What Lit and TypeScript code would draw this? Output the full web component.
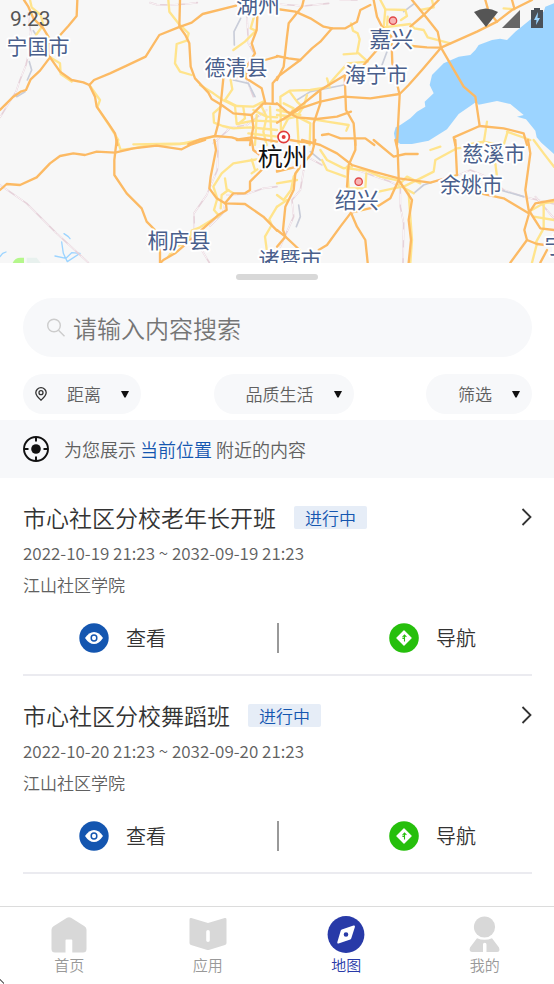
import { LitElement, html, svg, css } from "lit";
import { customElement } from "lit/decorators.js";

// Map artwork: four tiles, each 831 units wide, listing lines by class.
interface Tile {
  x: number;
  y: number;
  rail: string[];
  canal: string[];
  minor: string[];
  major: string[];
}

const TILES: Tile[] = [
  {
    x: 0, y: 0,
    rail: ["450,8 470,14 510,15 560,12 592,8", "84,40 92,95 86,160 78,195 60,240 48,275 0,352", "738,0 742,70 745,130 762,160", "700,240 735,225 760,290", "680,385 740,375 800,330", "640,430 690,385"],
    canal: ["88,185 95,210 82,240", "50,290 75,275", "722,55 702,95 703,135", "700,240 745,250 765,290", "100,92 108,104"],
    minor: ["90,0 95,22 122,45 130,75 108,105", "150,172 180,190 182,222 215,245", "268,255 300,300 292,322 325,372 355,420", "505,0 508,35 535,70 566,100 560,122 530,132 525,190 540,215 575,225", "600,255 640,280 668,300 705,318", "762,50 752,85 768,92 735,125 700,150", "692,240 697,268 675,300 710,318 760,320 790,305", "665,318 640,340 642,368 668,378 700,385 750,382 831,390", "705,318 710,372 760,362 831,365", "730,322 735,355 715,372", "780,310 800,350 790,395 800,435", "760,330 800,350 831,352", "810,320 815,435", "745,400 831,410", "770,345 765,435", "400,433 480,432 570,430 645,408"],
    major: ["232,0 230,48 205,78 178,108", "72,0 85,20 100,55 130,85 148,115 150,172", "0,330 40,290 62,275 78,270 92,238 120,212 150,172 180,215 215,240 250,247 268,255", "268,255 282,240 330,220 380,197 437,170 478,105 535,82 575,68 608,42 708,17", "268,255 285,290 290,320 325,370 345,400 352,435", "540,0 538,80 556,105 568,130 572,200 585,235 625,278 635,297 665,315 700,340 755,345 790,310 831,312", "670,235 662,315 655,370 645,408", "565,432 600,418 645,408 695,412 715,418 755,412 831,425", "772,50 770,90 755,130 765,160 740,200 738,235 785,265 796,310", "795,180 831,170", "831,235 818,250 818,310", "755,345 760,380 750,435"],
  },
  {
    x: 831, y: 0,
    rail: ["0,12 80,18 155,10", "190,0 240,0"],
    canal: ["380,35 410,12", "330,155 315,195", "60,300 100,275 200,255", "0,5 0,40"],
    minor: ["310,0 325,28 385,30 390,48 372,60", "325,28 320,82 400,72 412,85 440,90 452,112 520,130", "222,70 228,92 242,100 248,118 240,160 200,163", "245,160 272,185 212,190 180,225 148,262 100,270 38,272 10,290 12,400", "332,50 330,82", "465,0 470,22 430,30", "38,275 60,305 78,322 60,350 65,435", "0,330 70,345", "30,348 0,345", "90,285 80,320 30,350", "90,355 150,365 215,375 208,392", "20,310 50,325 15,390", "10,360 60,350 100,370 98,435", "150,235 158,262", "620,430 630,365", "692,395 680,435", "565,435 620,425 665,435", "712,28 680,25", "690,395 760,420"],
    major: ["0,27 55,35 100,55 140,80 165,85 205,85 240,65 250,30 280,15", "80,0 75,20 35,70 30,110 20,200 0,240", "165,85 130,125 105,145 70,180 0,232", "0,168 35,175 70,180", "290,0 300,50 315,80 343,110 346,190 368,285 360,435", "485,0 440,45 400,80", "405,0 450,55 482,95 492,143", "405,138 450,142 492,143", "492,143 600,95 660,65 705,30 765,0", "625,0 635,35 660,65", "705,0 712,25", "492,143 435,210 395,255 368,282 280,295 200,290 130,305 70,325 30,350 0,368", "492,143 525,200 560,260 595,290 608,378 680,385 740,400 750,435", "608,378 530,412 535,435", "300,150 260,195", "205,225 130,270 80,310 40,340", "203,228 207,330 230,370 235,435", "130,275 130,310 110,370 110,435", "0,310 30,335 60,352 120,357 180,350 222,335", "135,405 155,402 190,415 265,415 292,435"],
  },
  {
    x: 0, y: 420,
    rail: ["0,135 80,190 170,280 265,368", "655,0 652,90 620,165 582,220 583,280", "605,330 628,368", "630,258 668,220 675,190", "680,165 740,162 790,145 831,140"],
    canal: [],
    minor: ["352,0 362,30 400,25 450,15 540,12 600,0", "770,58 700,70 665,100 640,140 652,175 642,210 655,225", "675,115 680,148 700,160", "685,150 665,165 662,205", "660,225 600,262 575,272 568,300", "505,350 525,320 560,310", "831,200 808,238 815,255 795,290 800,328", "755,100 772,88", "755,58 765,90"],
    major: ["0,150 20,132 60,135 110,112 150,70 180,48 220,40 255,45 290,35 345,38 400,25 470,17 545,28 570,15 615,0", "350,0 343,60 343,105 380,160 425,205 440,245 465,270", "643,0 648,30 632,110 628,145 650,175 675,190 735,192 790,230 831,272", "678,190 680,210 655,225 610,265 560,310 525,340 490,360 480,370", "480,325 480,370", "785,90 750,125 750,150 735,160 700,160 675,190", "710,0 755,0 760,30 785,50"],
  },
  {
    x: 831, y: 420,
    rail: ["85,40 80,90 70,150 45,180 50,230 10,320", "90,50 135,75", "240,90 340,125 370,140 370,200 380,250 378,368", "545,105 580,90 640,115 680,150 740,170 831,192", "775,170 831,235"],
    canal: ["410,160 440,135 470,125", "65,195 70,230 58,260", "100,35 130,60", "670,150 740,170"],
    minor: ["0,165 20,180 42,150 50,110 70,80", "0,200 30,180", "0,130 60,120", "130,30 150,60 200,85 225,80", "135,60 150,90 205,110", "210,80 215,145 265,145 268,100", "210,85 270,92 310,110 365,122", "305,155 350,145 375,140 410,160", "380,140 430,115 470,95 475,60 540,25 620,15", "395,160 405,300 400,368", "770,0 800,40 831,80", "755,215 800,190 831,185", "780,310 765,368", "800,190 800,265 775,310", "655,70 660,110", "460,30 490,20", "365,135 390,110 430,130", "770,230 831,240"],
    major: ["355,0 362,30 365,115", "75,0 130,15 180,40 225,75 290,95 365,115 460,128 540,105", "235,0 235,30 215,75 210,140", "535,0 540,105", "290,0 350,50 385,42 422,42", "365,120 405,180 395,240 402,300 395,368", "365,120 340,175 300,200 222,218 190,260 150,315 125,330", "222,218 240,260 265,300 272,368", "115,0 105,40 70,80 55,100 50,150 25,200 18,270 25,290 68,330", "0,270 25,290 0,320", "40,0 100,10", "753,0 760,40 745,150 755,210 790,265 831,270", "610,160 680,175 755,220 775,190 831,180", "755,225 742,270 750,300 700,368", "750,300 780,312 831,318", "0,30 0,95 60,80", "810,330 790,368"],
  },
];

interface Place { name: string; x: number; y: number; kind: string }
const PLACES: Place[] = [
  { name: "宁国市", x: 114, y: 162, kind: "county" },
  { name: "湖州", x: 774, y: 40, kind: "city" },
  { name: "德清县", x: 708, y: 225, kind: "county" },
  { name: "嘉兴", x: 1174, y: 142, kind: "city" },
  { name: "海宁市", x: 1129, y: 246, kind: "county" },
  { name: "杭州", x: 848, y: 498, kind: "capital" },
  { name: "绍兴", x: 1070, y: 625, kind: "city" },
  { name: "慈溪市", x: 1481, y: 483, kind: "county" },
  { name: "余姚市", x: 1414, y: 576, kind: "county" },
  { name: "桐庐县", x: 537, y: 745, kind: "county" },
  { name: "诸暨市", x: 870, y: 801, kind: "county" },
  { name: "宁波", x: 1699, y: 759, kind: "city" },
];

const lines = (list: string[], cls: string) =>
  list.map((p) => svg`<polyline class=${cls} points=${p}></polyline>`);

@customElement("area-map")
class AreaMap extends LitElement {
  static styles = css`
    :host { display: block; height: 263px; background: #f7f7f7; overflow: hidden; }
    svg { display: block; width: 100%; height: 100%; }
    polyline { fill: none; stroke-linejoin: round; stroke-linecap: round; }
    .major { stroke: #fcba64; stroke-width: 7; }
    .minor { stroke: #ffe48c; stroke-width: 7; }
    .rail { stroke: #e6d2da; stroke-width: 5; }
    .tie { stroke: #fbf6f8; stroke-width: 3; stroke-dasharray: 30 24; }
    .canal { stroke: #c9cdd9; stroke-width: 5; }
    .stream { stroke: #9cd4ff; stroke-width: 4; }
    .sea { fill: #9cd4ff; }
    text {
      font-family: "Noto Sans CJK SC", sans-serif; font-weight: 400; text-anchor: middle;
      fill: #4a5f8c; stroke: #fff; stroke-width: 12; stroke-linejoin: round; paint-order: stroke;
    }
    .county { font-size: 63px; }
    .city { font-size: 66px; }
    .capital { font-size: 75px; fill: #111; }
  `;

  render() {
    return html`
      <svg viewBox="0 0 1662 789" preserveAspectRatio="xMidYMid slice" role="img" aria-label="地图">
        <path class="sea" d="M1662 10L1636 20L1631 35L1596 55L1571 75L1546 95L1521 120L1500 116L1476 120L1436 135L1426 150L1411 165L1376 170L1331 190L1296 225L1289 255L1301 280L1274 305L1276 320L1251 335L1231 355L1201 375L1187 382L1182 400L1186 422L1201 432L1236 432L1286 422L1341 388L1376 342L1411 318L1428 306L1436 314L1491 303L1531 312L1571 345L1551 350L1578 358L1606 392L1610 412L1624 428L1662 462Z"></path>
        <path d="M38 789Q44 773 62 773H72V789Z" fill="#b5f78c"></path>
        <path d="M80 773H110L122 789H80Z" fill="#e8f1ee"></path>
        <polyline class="stream" points="192,701 205,710 210,716"></polyline>
        <polyline class="stream" points="185,726 190,760 202,785 240,760 215,758 198,775 165,768"></polyline>
        <polyline class="stream" points="0,770 8,760 18,756"></polyline>
        ${TILES.map((t) => svg`<g transform="translate(${t.x} ${t.y})">
          ${lines(t.rail, "rail")}${lines(t.rail, "tie")}${lines(t.canal, "canal")}${lines(t.minor, "minor")}
        </g>`)}
        ${TILES.map((t) => svg`<g transform="translate(${t.x} ${t.y})">${lines(t.major, "major")}</g>`)}
        <g fill="#f8b5b5" stroke="#e04848" stroke-width="4">
          <circle cx="1179" cy="62" r="11"></circle>
          <circle cx="1076" cy="545" r="11"></circle>
        </g>
        <circle cx="851" cy="411" r="17" fill="#fff" stroke="#e23c3c" stroke-width="5"></circle>
        <circle cx="851" cy="411" r="6" fill="#e23c3c"></circle>
        ${PLACES.map((p) => svg`<text class=${p.kind} x=${p.x} y=${p.y}>${p.name}</text>`)}
      </svg>`;
  }
}

interface Course { title: string; time: string; place: string }
const COURSES: Course[] = [
  { title: "市心社区分校老年长开班", time: "2022-10-19 21:23 ~ 2032-09-19 21:23", place: "江山社区学院" },
  { title: "市心社区分校舞蹈班", time: "2022-10-20 21:23 ~ 2032-09-20 21:23", place: "江山社区学院" },
];

const pin = html`<svg width="12" height="14" viewBox="0 0 12 14" fill="none" stroke="#333" aria-hidden="true">
  <path d="M6 13.2C3.2 10.6.8 8.4.8 5.7A5.2 5 0 0 1 11.2 5.7C11.2 8.4 8.8 10.6 6 13.2Z" stroke-width="1.3"></path>
  <circle cx="6" cy="5.7" r="2" stroke-width="1.3"></circle></svg>`;

const caret = html`<svg width="8" height="7" viewBox="0 0 8 7" aria-hidden="true"><path d="M0 0H8L4.600 6.500H3.400Z" fill="#111"></path></svg>`;

const eye = html`<svg width="30" height="30" viewBox="0 0 30 30" aria-hidden="true">
  <circle cx="15" cy="15" r="14.7" fill="#1456b0"></circle>
  <path d="M6 15Q10 9 15 9T24 15Q20 21 15 21T6 15Z" fill="#fff"></path>
  <ellipse cx="15" cy="15" rx="2.8" ry="3" fill="#fff" stroke="#1456b0" stroke-width="1.5"></ellipse></svg>`;

const guide = html`<svg width="30" height="30" viewBox="0 0 30 30" aria-hidden="true">
  <circle cx="15" cy="15" r="14.8" fill="#26bf0c"></circle>
  <path d="M15 8L22 15L15 22L8 15Z" fill="#fff" stroke="#fff" stroke-width="1.4" stroke-linejoin="round"></path>
  <path d="M15.5 18.600V12M13.600 14.200L15.500 12L17.400 13.800M13.400 15.400H15.500" fill="none" stroke="#26bf0c" stroke-width="1.1"></path></svg>`;

const TABS = [
  { label: "首页", icon: svg`<path d="M17 1.8Q19 .6 21 1.8L34.5 10.2Q36.500 11.400 36.500 13.700V33Q36.500 36.500 33 36.500H22.300V24.500Q22.300 23.500 21.300 23.500H16.500Q15.500 23.500 15.500 24.500V36.500H5Q1.500 36.500 1.500 33V13.700Q1.500 11.400 3.500 10.200Z" fill="#d8d8d8"></path>` },
  { label: "应用", icon: svg`<path fill-rule="evenodd" d="M2.300 2L19 7L35.700 2Q37.500 1.600 37.500 3.400V27Q37.500 28.600 36 29.100L20.500 33.700Q19 34.200 17.500 33.700L2 29.100Q.5 28.600.5 27V3.400Q.5 1.600 2.300 2ZM19 14Q17.200 14 17.200 15.800V24.200Q17.200 26 19 26T20.800 24.200V15.800Q20.800 14 19 14Z" fill="#d8d8d8"></path>` },
  { label: "地图", active: true, icon: svg`<circle cx="19" cy="18.500" r="18.400" fill="#283aa8"></circle><path fill-rule="evenodd" d="M26.500 9.600Q28.300 9.300 27.900 11L24.300 22.200Q24 23 23.300 23.400L11.500 27.500Q9.900 27.800 10.300 26.200L13.700 14.800Q14 13.900 14.800 13.500ZM19 16.200A2.300 2.300 0 1 0 19 20.800A2.300 2.300 0 1 0 19 16.200Z" fill="#fff"></path>` },
  { label: "我的", icon: svg`<circle cx="18.500" cy="11" r="10.600" fill="#d8d8d8"></circle><path d="M11 22.300Q18.500 25.300 26 22.300L33 31.500Q34.500 35.800 31 36H20.500V28.500Q20.500 26.800 18.700 26.800T17 28.500V36H6.500Q2.500 35.800 4 31.500Z" fill="#d8d8d8"></path>` },
];

@customElement("app-root")
class AppRoot extends LitElement {
  static styles = css`
    :host {
      display: flex; flex-direction: column; min-height: 100vh; position: relative;
      background: #fff; color: #333; font-family: "Noto Sans CJK SC", sans-serif; font-weight: 350;
    }
    * { box-sizing: border-box; }
    svg { display: block; flex: none; }
    button, input, select { font: inherit; color: inherit; border: 0; background: none; padding: 0; margin: 0; }
    h2, p { margin: 0; font-weight: inherit; }
    a { color: inherit; text-decoration: none; }
    .status {
      position: absolute; top: 0; left: 0; right: 0; height: 38px; padding: 0 10px;
      display: flex; align-items: center; justify-content: space-between;
      font: 400 21px Roboto, sans-serif; color: #555;
    }
    .grip { width: 82px; height: 6px; border-radius: 3px; background: #d8d8d8; margin: 11px auto 18px; }
    .controls { padding: 0 22px 6px 23px; }
    .search {
      display: flex; align-items: center; gap: 8px; height: 59px; padding: 0 24px;
      border-radius: 30px; background: #f7f8fa; font-size: 24px;
    }
    .search input { flex: 1; min-width: 0; outline: 0; height: 40px; }
    .search input::placeholder { color: #757575; opacity: 1; }
    .filters { display: flex; justify-content: space-between; margin-top: 17px; }
    .chip {
      display: flex; align-items: center; height: 40px; padding: 0 12px; border-radius: 20px;
      background: #f7f8fa; color: #606060; font-size: 17px; gap: 20px;
    }
    .chip.plain { padding-left: 32px; }
    .chip select { appearance: none; line-height: 24px; }
    .near {
      display: flex; align-items: center; gap: 15px; min-height: 58px; padding: 0 23px;
      background: #f7f8fa; color: #606060; font-size: 18px;
    }
    .near a, .tag { color: #1456b0; }
    .list { flex: 1; padding: 0 22px 0 23px; }
    .course { height: 198px; padding-top: 21px; border-bottom: 2px solid #ebebf0; display: flex; flex-direction: column; }
    .head { display: flex; align-items: center; height: 38px; padding-bottom: 2px; gap: 18px; }
    .head h2 { font-size: 23px; line-height: 36px; }
    .tag { background: #e6edf7; border-radius: 2px; padding: 0 11px; font-size: 17px; line-height: 23px; }
    .more { margin-left: auto; }
    .meta { font-size: 17px; line-height: 32px; color: #606060; }
    .actions { display: flex; justify-content: space-between; align-items: center; margin-top: 22px; padding: 0 56px; }
    .actions i { width: 2px; height: 30px; background: #999; }
    .actions button { display: flex; align-items: center; gap: 17px; font-size: 20px; line-height: 30px; }
    .tabs { display: grid; grid-template-columns: repeat(4, 1fr); height: 78px; border-top: 1px solid #dcdcdc; }
    .tabs a { display: flex; flex-direction: column; align-items: center; padding-top: 9px; font-size: 15px; line-height: 24px; color: #999; }
    .tabs a.active { color: #283aa8; }
    .pointer { position: absolute; left: 0; bottom: 0; }
  `;

  render() {
    return html`
      <area-map></area-map>
      <div class="status">
        <span>9:23</span>
        <svg width="70" height="22" viewBox="0 0 70 22" aria-hidden="true">
          <path d="M0 4Q12-3 24 4L12 19Z" fill="#555"></path>
          <path d="M46 2V20H28Z" fill="#666"></path>
          <path d="M60 0H66V2H69V20H57V2H60Z" fill="#4a5058"></path>
          <path d="M64 4L60 12H62.500L62 17L66 10H63.500Z" fill="#9cd4ff"></path>
        </svg>
      </div>
      <div class="grip"></div>
      <div class="controls">
        <label class="search">
          <svg width="18" height="19" viewBox="0 0 18 19" fill="none" stroke="#ccc" stroke-width="1.4" aria-hidden="true"><circle cx="7" cy="7.500" r="6.300"></circle><path d="M11.500 12.200L17.500 18.200"></path></svg>
          <input type="text" placeholder="请输入内容搜索" aria-label="搜索">
        </label>
        <div class="filters">
          <label class="chip">${pin}<select aria-label="距离"><option>距离</option></select>${caret}</label>
          <label class="chip plain"><select aria-label="品质生活"><option>品质生活</option></select>${caret}</label>
          <label class="chip plain"><select aria-label="筛选"><option>筛选</option></select>${caret}</label>
        </div>
      </div>
      <div class="near">
        <svg width="26" height="26" viewBox="0 0 26 26" aria-hidden="true"><circle cx="13" cy="13" r="12" fill="none" stroke="#111" stroke-width="1.900"></circle><circle cx="13" cy="13" r="4.800" fill="#111"></circle><path d="M13 1V5.500M13 20.500V25M1 13H5.500M20.500 13H25" stroke="#111" stroke-width="2"></path></svg>
        <p>为您展示 <a href="#location">当前位置</a> 附近的内容</p>
      </div>
      <main class="list">
        ${COURSES.map((c) => html`<article class="course">
          <div class="head">
            <h2>${c.title}</h2><span class="tag">进行中</span>
            <a class="more" href="#course" aria-label="详情"><svg width="11" height="18" viewBox="0 0 11 18" fill="none" stroke="#333" stroke-width="1.800"><path d="M1.500 1L9.500 9L1.500 17"></path></svg></a>
          </div>
          <p class="meta">${c.time}</p>
          <p class="meta">${c.place}</p>
          <div class="actions">
            <button type="button">${eye}查看</button><i></i><button type="button">${guide}导航</button>
          </div>
        </article>`)}
      </main>
      <nav class="tabs">
        ${TABS.map((t) => html`<a href="#tab" class=${t.active ? "active" : ""}><svg width="38" height="37" viewBox="0 0 38 37" aria-hidden="true">${t.icon}</svg>${t.label}</a>`)}
      </nav>
      <svg class="pointer" width="5" height="5" viewBox="0 0 5 5" aria-hidden="true"><path d="M0 1H1M1 2H2M2 3H3M3 4H4" stroke="#000"></path></svg>`;
  }
}
